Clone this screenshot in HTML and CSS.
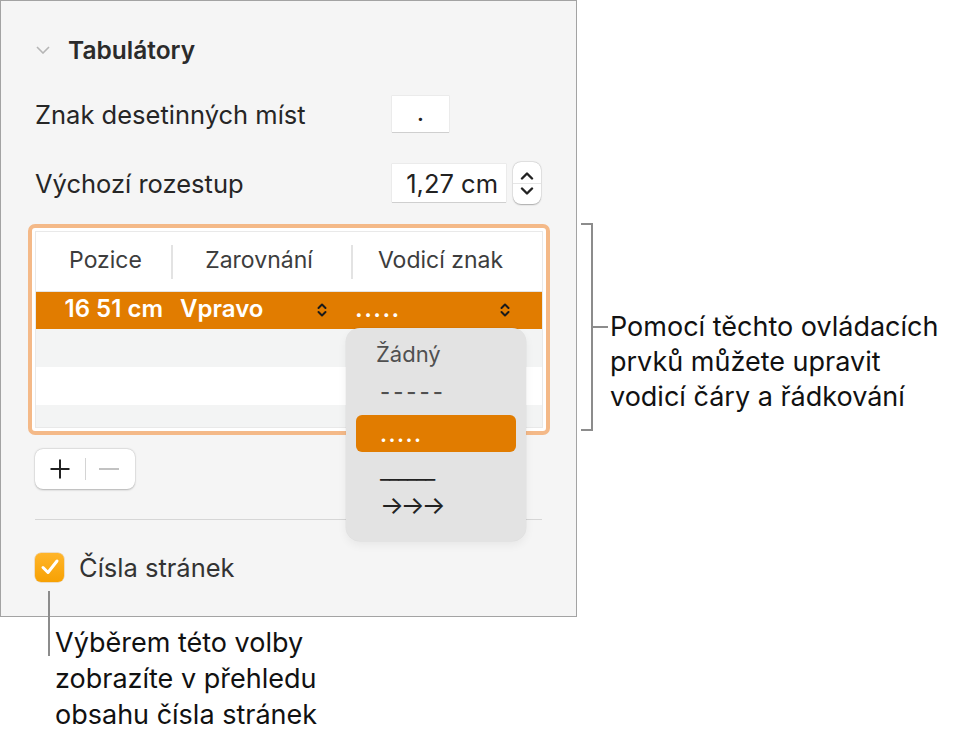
FILE: index.html
```html
<!DOCTYPE html>
<html lang="cs">
<head>
<meta charset="utf-8">
<link rel="stylesheet" href="styles.css">
</head>
<body>
<div class="page">
  <div class="top">
    <div class="panel">
      <div class="sec-head">
        <svg class="chev" width="14" height="8" viewBox="0 0 14 8"><path d="M1 1 L7 7 L13 1" fill="none" stroke="#b5b5b5" stroke-width="1.6"/></svg>
        <span class="sec-title">Tabulátory</span>
      </div>
      <div class="field-row r1">
        <span class="label">Znak desetinných míst</span>
        <span class="input small">.</span>
      </div>
      <div class="field-row r2">
        <span class="label">Výchozí rozestup</span>
        <span class="input wide">1,27 cm</span>
        <span class="stepper">
          <svg width="14" height="9" viewBox="0 0 14 9"><path d="M2 7.5 L7 2.5 L12 7.5" fill="none" stroke="#222" stroke-width="2.4" stroke-linecap="round" stroke-linejoin="round"/></svg>
          <span class="step-sep"></span>
          <svg width="14" height="9" viewBox="0 0 14 9"><path d="M2 1.5 L7 6.5 L12 1.5" fill="none" stroke="#222" stroke-width="2.4" stroke-linecap="round" stroke-linejoin="round"/></svg>
        </span>
      </div>
      <div class="tablewrap">
        <div class="table">
          <div class="thead">
            <div class="th c1">Pozice</div>
            <div class="th c2">Zarovnání</div>
            <div class="th c3">Vodicí znak</div>
          </div>
          <div class="row sel">
            <div class="td c1 pos">16 51 cm</div>
            <div class="td c2 pop"><span>Vpravo</span>
              <svg class="ud" width="10" height="14" viewBox="0 0 10 14"><path d="M1.5 5 L5 1.5 L8.5 5 M1.5 9 L5 12.5 L8.5 9" fill="none" stroke="#1a1a1a" stroke-width="2" stroke-linecap="round" stroke-linejoin="round"/></svg>
            </div>
            <div class="td c3 pop"><span class="dots">.....</span>
              <svg class="ud" width="10" height="14" viewBox="0 0 10 14"><path d="M1.5 5 L5 1.5 L8.5 5 M1.5 9 L5 12.5 L8.5 9" fill="none" stroke="#1a1a1a" stroke-width="2" stroke-linecap="round" stroke-linejoin="round"/></svg>
            </div>
          </div>
          <div class="row alt"></div>
          <div class="row"></div>
          <div class="row alt last"></div>
        </div>
        <div class="menu">
          <div class="mi gray">Žádný</div>
          <div class="mi dash">-----</div>
          <div class="mi hl"><span class="dots">.....</span></div>
          <div class="mi under">______</div>
          <div class="mi arrows">→→→</div>
        </div>
      </div>
      <div class="pm">
        <span class="plus"><svg width="22" height="22" viewBox="0 0 22 22"><path d="M11 1.5 V20.5 M1.5 11 H20.5" stroke="#222" stroke-width="2" fill="none"/></svg></span>
        <span class="pm-sep"></span>
        <span class="minus"></span>
      </div>
      <div class="divider"></div>
      <div class="check-row">
        <span class="checkbox">
          <svg width="20" height="18" viewBox="0 0 20 18"><path d="M3 9.5 L8 14.5 L17 3" fill="none" stroke="#fff" stroke-width="3" stroke-linecap="round" stroke-linejoin="round"/></svg>
        </span>
        <span class="check-label">Čísla stránek</span>
      </div>
    </div>
    <div class="note-right">
      <div class="bracket"></div>
      <div class="note-text">
        <span class="tick"></span>
        <p>Pomocí těchto ovládacích<br>prvků můžete upravit<br>vodicí čáry a řádkování</p>
      </div>
    </div>
  </div>
  <div class="note-bottom">
    <span class="lead"></span>
    <p>Výběrem této volby<br>zobrazíte v přehledu<br>obsahu čísla stránek</p>
  </div>
</div>
</body>
</html>
```

FILE: styles.css
```css
html, body {
  margin: 0;
  padding: 0;
  background: #ffffff;
}
body {
  font-family: Inter, "Liberation Sans", sans-serif;
  color: #262626;
}
.page {
  width: 956px;
  height: 742px;
  overflow: hidden;
}
.top {
  display: flex;
  align-items: flex-start;
}
.panel {
  box-sizing: border-box;
  width: 577px;
  height: 617px;
  border: 1px solid #a3a3a3;
  background: #f5f5f5;
  padding: 0 35px 0 34px;
  flex: none;
}
.sec-head {
  display: flex;
  align-items: center;
  height: 40px;
  margin-top: 29px;
}
.chev {
  margin-left: 1px;
  margin-right: 18px;
}
.sec-title {
  font-weight: 600;
  font-size: 24.5px;
  color: #2b2b2b;
}
.field-row {
  display: grid;
  grid-template-columns: 357px auto auto;
  align-items: center;
  font-size: 25.5px;
}
.r1 {
  margin-top: 25px;
  height: 38px;
}
.r2 {
  margin-top: 29px;
  height: 42px;
}
.label {
  color: #262626;
}
.input {
  box-sizing: border-box;
  background: #fff;
  box-shadow: 0 1px 0 #cfcfcf, 0 0 0 0.5px #e2e2e2;
  display: flex;
  align-items: center;
  font-size: 25.5px;
  color: #222;
}
.input.small {
  width: 57px;
  height: 36px;
  justify-content: center;
  padding-bottom: 6px;
}
.input.wide {
  width: 114px;
  height: 38px;
  justify-content: flex-end;
  padding-right: 8px;
}
.stepper {
  box-sizing: border-box;
  margin-left: 7px;
  width: 28px;
  height: 42px;
  background: #fff;
  border-radius: 8px;
  box-shadow: 0 0.5px 1.5px rgba(0,0,0,0.28), 0 0 0 0.5px rgba(0,0,0,0.08);
  display: flex;
  flex-direction: column;
  align-items: center;
  justify-content: center;
  gap: 3px;
}
.step-sep {
  width: 28px;
  height: 1px;
  background: #e6e6e6;
}
.tablewrap {
  position: relative;
  box-sizing: border-box;
  margin-top: 20px;
  margin-left: -7px;
  width: 522px;
  height: 211px;
  border: 4px solid #f4b988;
  border-radius: 7px;
  background: #fff;
  padding: 4px;
}
.table {
  background: #fff;
  height: 195px;
  overflow: hidden;
  box-shadow: 0 0 0 1px #e9e9e9;
}
.thead {
  display: grid;
  grid-template-columns: 135px 180px 1fr;
  height: 60px;
  align-items: center;
  border-bottom: 1px solid #e4e4e4;
  box-sizing: border-box;
}
.th {
  text-align: center;
  font-size: 23px;
  color: #3d3d3d;
  height: 34px;
  line-height: 30px;
}
.th.c1 { padding-left: 4px; }
.th.c2, .th.c3 {
  border-left: 2px solid #e3e3e3;
}
.th.c2 { padding-right: 6px; }
.th.c3 { padding-right: 14px; }
.row {
  height: 38px;
  background: #fff;
}
.row.alt { background: #f3f4f4; }
.row.last { height: 22px; }
.row.sel {
  box-sizing: border-box;
  height: 37px;
  background: #e17c00;
  display: grid;
  grid-template-columns: 135px 180px 1fr;
  align-items: center;
  color: #fff;
  font-weight: 600;
  font-size: 24px;
  padding-bottom: 5px;
}
.td.pos {
  text-align: right;
  padding-right: 8px;
  white-space: nowrap;
}
.td.pop {
  display: flex;
  align-items: center;
  justify-content: space-between;
  padding-left: 9px;
  padding-right: 24px;
}
.td.c3.pop {
  padding-left: 4px;
  padding-right: 32px;
}
.dots {
  letter-spacing: 1.5px;
}
.ud { display: block; margin-top: 4px; }
.menu {
  position: absolute;
  left: 314px;
  top: 100px;
  width: 180px;
  height: 213px;
  box-sizing: border-box;
  background: #e3e3e3;
  border-radius: 14px;
  box-shadow: 0 0 0 0.5px rgba(0,0,0,0.06), 0 4px 10px rgba(0,0,0,0.06);
  padding: 7px 10px 0 10px;
}
.mi {
  height: 38px;
  display: flex;
  align-items: center;
  padding-left: 20px;
  font-size: 22px;
  color: #222;
}
.mi.gray { color: #505050; }
.mi.dash {
  color: #505050;
  letter-spacing: 3px;
  font-size: 22px;
  padding-left: 24px;
  font-weight: 500;
}
.mi.hl {
  background: #e17c00;
  border-radius: 6px;
  color: #fff;
  font-weight: 600;
  height: 37px;
  margin-top: 4px;
  padding-left: 24px;
}
.mi.under {
  padding-left: 24px;
  letter-spacing: -1px;
  font-size: 22px;
}
.mi.arrows {
  height: 30px;
  padding-left: 24px;
  letter-spacing: -3px;
  font-size: 25px;
}
.pm {
  box-sizing: border-box;
  margin-top: 14px;
  width: 100px;
  height: 40px;
  background: #fff;
  border-radius: 8px;
  box-shadow: 0 0.5px 2px rgba(0,0,0,0.25), 0 0 0 0.5px rgba(0,0,0,0.06);
  display: flex;
  align-items: center;
}
.plus {
  width: 50px;
  display: flex;
  justify-content: center;
  align-items: center;
}
.plus svg { display: block; }
.pm-sep {
  width: 1px;
  height: 22px;
  background: #d4d4d4;
}
.minus {
  width: 20px;
  height: 2px;
  background: #c2c2c2;
  margin-left: 13px;
}
.divider {
  margin-top: 30px;
  height: 1px;
  background: #d6d6d6;
  width: 507px;
}
.check-row {
  display: flex;
  align-items: center;
  margin-top: 32px;
  height: 30px;
}
.checkbox {
  width: 29px;
  height: 29px;
  border-radius: 6px;
  background: linear-gradient(#ffb52a, #f7a103);
  box-shadow: 0 0 0 0.5px rgba(200,120,0,0.4);
  display: flex;
  align-items: center;
  justify-content: center;
  margin-right: 15px;
}
.check-label {
  font-size: 25.5px;
  color: #333;
}
.note-right {
  display: flex;
  align-items: flex-start;
  margin-top: 223px;
  margin-left: 4px;
}
.bracket {
  box-sizing: border-box;
  width: 12px;
  height: 208px;
  border: 2px solid #8c8c8c;
  border-left: none;
}
.note-text {
  display: flex;
  align-items: flex-start;
  margin-top: 86px;
}
.tick {
  width: 15px;
  height: 2px;
  background: #8c8c8c;
  margin-top: 17px;
}
.note-text p {
  margin: 0 0 0 2px;
  font-size: 27px;
  line-height: 35px;
  color: #111;
  white-space: nowrap;
}
.note-bottom {
  position: relative;
  padding-left: 55px;
  margin-top: 8px;
}
.lead {
  position: absolute;
  left: 48px;
  top: -34px;
  width: 2px;
  height: 65px;
  background: #8c8c8c;
}
.note-bottom p {
  margin: 0;
  font-size: 27px;
  line-height: 36px;
  color: #111;
}
```
